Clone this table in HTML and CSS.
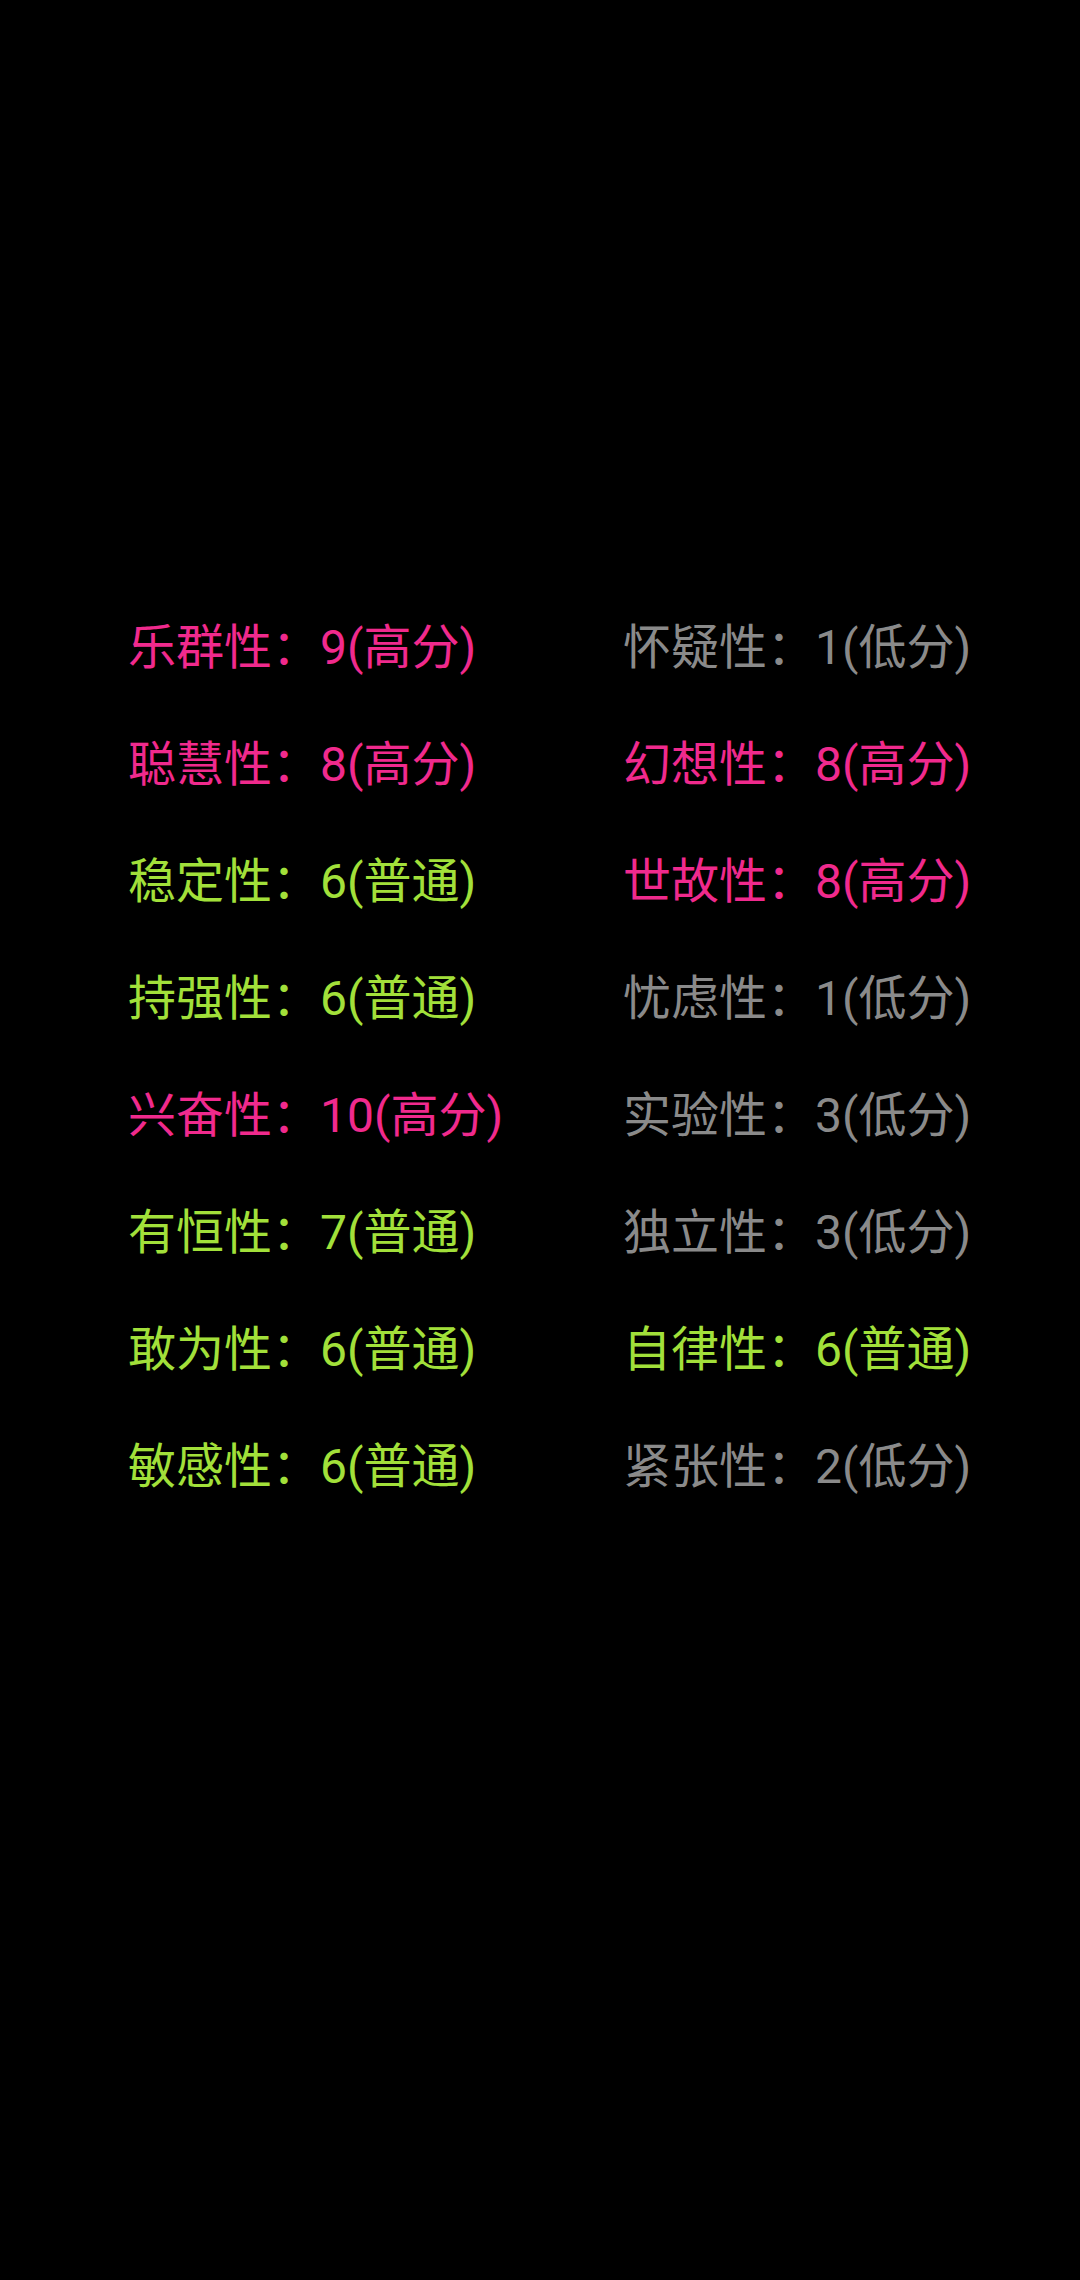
FILE: index.html
```html
<!DOCTYPE html>
<html lang="zh-CN">
<head>
<meta charset="utf-8">
<link rel="stylesheet" href="styles.css">
</head>
<body>
<div class="grid">
  <div class="item high">乐群性：9(高分)</div>
  <div class="item low">怀疑性：1(低分)</div>
  <div class="item high">聪慧性：8(高分)</div>
  <div class="item high">幻想性：8(高分)</div>
  <div class="item mid">稳定性：6(普通)</div>
  <div class="item high">世故性：8(高分)</div>
  <div class="item mid">持强性：6(普通)</div>
  <div class="item low">忧虑性：1(低分)</div>
  <div class="item high">兴奋性：10(高分)</div>
  <div class="item low">实验性：3(低分)</div>
  <div class="item mid">有恒性：7(普通)</div>
  <div class="item low">独立性：3(低分)</div>
  <div class="item mid">敢为性：6(普通)</div>
  <div class="item mid">自律性：6(普通)</div>
  <div class="item mid">敏感性：6(普通)</div>
  <div class="item low">紧张性：2(低分)</div>
</div>
</body>
</html>
```
FILE: styles.css
```css
html, body {
  margin: 0;
  padding: 0;
  background: #000;
}
body {
  width: 1080px;
  height: 2280px;
  font-family: Roboto, "Noto Sans CJK SC", sans-serif;
}
.grid {
  display: grid;
  grid-template-columns: 495px auto;
  padding: 589px 0 0 128px;
}
.item {
  font-size: 48px;
  height: 117px;
  line-height: 117px;
  white-space: nowrap;
}
.high { color: #f02a8d; }
.mid { color: #a2e03a; }
.low { color: #8a8a8a; }
```
